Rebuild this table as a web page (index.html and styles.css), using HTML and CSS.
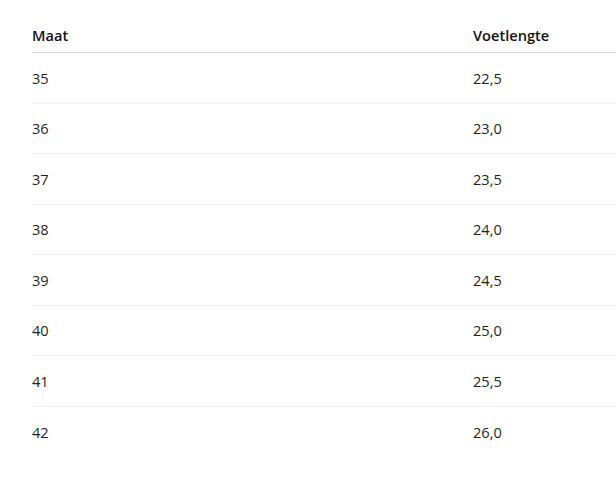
FILE: index.html
```html
<!DOCTYPE html>
<html lang="nl">
<head>
<meta charset="utf-8">
<link rel="stylesheet" href="styles.css">
</head>
<body>
<div class="wrap">
  <div class="table">
    <div class="row head"><div class="c1">Maat</div><div class="c2">Voetlengte</div></div>
    <div class="row"><div class="c1">35</div><div class="c2">22,5</div></div>
    <div class="row"><div class="c1">36</div><div class="c2">23,0</div></div>
    <div class="row"><div class="c1">37</div><div class="c2">23,5</div></div>
    <div class="row"><div class="c1">38</div><div class="c2">24,0</div></div>
    <div class="row"><div class="c1">39</div><div class="c2">24,5</div></div>
    <div class="row"><div class="c1">40</div><div class="c2">25,0</div></div>
    <div class="row"><div class="c1">41</div><div class="c2">25,5</div></div>
    <div class="row last"><div class="c1">42</div><div class="c2">26,0</div></div>
  </div>
</div>
</body>
</html>
```
FILE: styles.css
```css
html, body { margin: 0; background: #fff; }
body {
  font-family: "Open Sans", "Noto Sans", sans-serif;
  font-size: 14.6px;
  color: #1f1f1f;
}
.wrap { padding: 18px 0 0 32px; }
.table { width: 584px; }
.row {
  display: flex;
  height: 50.5px;
  align-items: center;
  border-bottom: 1px solid #f0f0f0;
  box-sizing: border-box;
}
.row.head {
  height: 35px;
  font-weight: 600;
  border-bottom-color: #d9d9d9;
  color: #111;
}
.row.last { border-bottom: none; }
.c1 { width: 441px; flex: none; }
.c2 { flex: 1; }
```
